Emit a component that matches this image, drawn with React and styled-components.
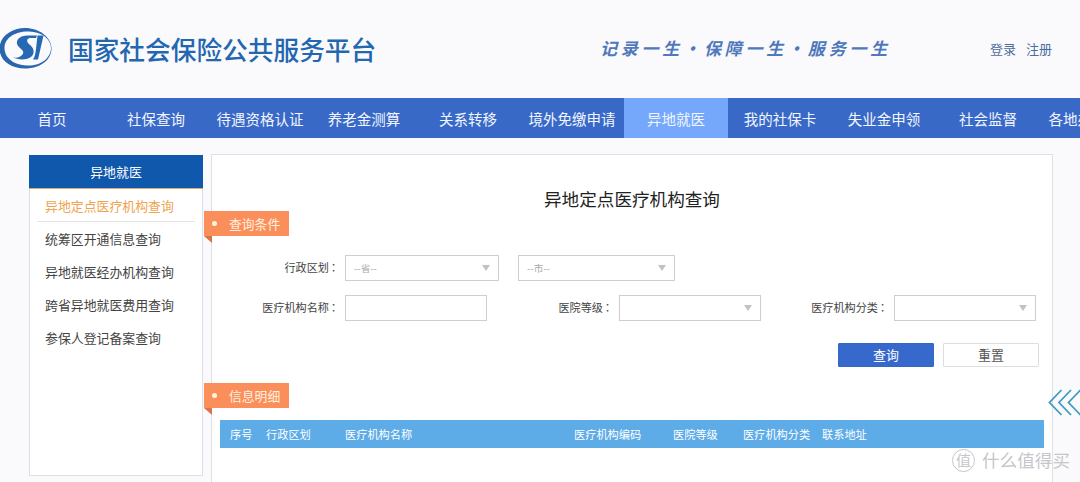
import React from "react";
import styled, { createGlobalStyle } from "styled-components";

const GlobalStyle = createGlobalStyle`
  * {
    box-sizing: border-box;
  }
  body {
    margin: 0;
    background-color: #fafafc;
    font-family: "Noto Sans CJK SC", sans-serif;
    color: #444;
    overflow: hidden;
  }
`;

const Page = styled.div`
  position: relative;
  width: 1080px;
  height: 482px;
  overflow: hidden;
`;

// Header
const Header = styled.header`
  display: flex;
  align-items: center;
  height: 98px;
`;

const SiteName = styled.h1`
  margin: 0 0 1px 16px;
  width: 530px;
  font-size: 25.7px;
  font-weight: 500;
  line-height: 40px;
  color: #2367b0;
`;

const Slogan = styled.div`
  display: flex;
  width: 392px;
  padding-bottom: 2px;
  font-size: 17px;
  font-weight: 700;
  font-style: italic;
  line-height: 24px;
  color: #5078bb;

  span {
    width: 20.8px;
    text-align: center;
  }
`;

const UserLinks = styled.div`
  display: flex;
  gap: 10px;
  padding-bottom: 1px;

  a {
    font-size: 13px;
    line-height: 20px;
    color: #4a6d9f;
  }
`;

// Navigation bar
const NavList = styled.ul`
  display: flex;
  list-style-type: none;
  margin: 0;
  padding: 0;
  height: 40px;
  background-color: #3969c7;
`;

const NavItem = styled.li`
  flex: 0 0 104px;
  text-align: center;
  white-space: nowrap;
  font-size: 14.5px;
  line-height: 41px;
  height: 40px;
  color: #f2f6ff;
  background-color: ${(props) => (props.$active ? "#75a8fa" : "transparent")};
`;

const Body = styled.main`
  display: flex;
  align-items: flex-start;
  gap: 8px;
  padding: 16px 0 0 29px;
`;

// Sidebar
const SideBar = styled.aside`
  width: 174px;
  height: 321px;
  margin-top: 1px;
  background-color: #fff;
  border: 1px solid #e0e0e4;
  border-top: none;
`;

const SideTitle = styled.div`
  height: 34px;
  margin: 0 -1px;
  background-color: #0f58ab;
  border-bottom: 1px solid #d9a877;
  text-align: center;
  font-size: 12.9px;
  line-height: 33px;
  color: #fff;
`;

const SideItem = styled.div`
  height: 33px;
  margin: 0 7px;
  padding-left: 8px;
  font-size: 12.9px;
  line-height: 33px;
  color: ${(props) => (props.$active ? "#efa34e" : "#444")};
  border-bottom: 1px solid ${(props) => (props.$active ? "#e6e3e3" : "transparent")};
`;

// Main panel
const Panel = styled.section`
  width: 842px;
  height: 360px;
  background-color: #fff;
  border: 1px solid #e0e0e4;
`;

const PanelTitle = styled.h2`
  margin: 32px 0 0;
  text-align: center;
  font-size: 17.6px;
  font-weight: 400;
  line-height: 24px;
  height: 24px;
  color: #222;
`;

const Ribbon = styled.div`
  position: relative;
  display: flex;
  align-items: center;
  width: 85px;
  height: 25px;
  margin-left: -8px;
  padding-left: 8px;
  background-color: #fb8f5c;
  font-size: 12.8px;
  line-height: 23px;
  color: #fff0df;

  &::before {
    content: "";
    width: 5px;
    height: 5px;
    margin-right: 12px;
    border-radius: 50%;
    background-color: #fff6dc;
  }

  &::after {
    content: "";
    position: absolute;
    left: 0;
    top: 25px;
    border-top: 7px solid #dc7348;
    border-left: 8px solid transparent;
  }
`;

const Form = styled.div`
  padding: 19px 0 0 41px;
  height: 147px;
`;

const FormRow = styled.div`
  display: flex;
  align-items: center;
  height: 25px;
  margin-bottom: 15px;
`;

const Label = styled.label`
  width: ${(props) => props.$width}px;
  padding: 0 5px 2px 0;
  text-align: right;
  white-space: nowrap;
  font-size: 11.1px;
  color: #444;

  span {
    margin: 0 1px 0 -1px;
    font-family: "Noto Sans CJK TC", sans-serif;
  }
`;

const Field = styled.div`
  display: flex;
  align-items: center;
  justify-content: space-between;
  width: ${(props) => props.$width}px;
  height: 26px;
  margin-right: ${(props) => props.$gap || 0}px;
  padding: 0 8px;
  border: 1px solid #cecece;
  background-color: #fff;
  font-size: 9.6px;
  color: #aaa;
`;

const Arrow = styled.i`
  border-top: 6px solid #c2c2c2;
  border-left: 4px solid transparent;
  border-right: 4px solid transparent;
`;

const Actions = styled.div`
  display: flex;
  justify-content: flex-end;
  gap: 9px;
  padding: 8px 13px 0 0;
`;

const Button = styled.button`
  width: 96px;
  height: 24px;
  padding: 0;
  border: 1px solid ${(props) => (props.$primary ? "#3466c8" : "#dedee2")};
  border-radius: 1px;
  background-color: ${(props) => (props.$primary ? "#3769cc" : "#fff")};
  color: ${(props) => (props.$primary ? "#fff" : "#555")};
  font-family: inherit;
  font-size: 12.9px;
  line-height: 22px;
`;

const TableHead = styled.div`
  display: grid;
  grid-template-columns: 36px 79px 229px 99px 70px 79px 1fr;
  width: 824px;
  height: 28px;
  margin: 12px 0 0 8px;
  padding-left: 10px;
  background-color: #5dabe7;
  font-size: 11.2px;
  line-height: 29px;
  color: #fff;
`;

// Floating pieces over the page
const DrawerHandle = styled.svg`
  position: absolute;
  right: 0;
  top: 389px;
`;

const Watermark = styled.div`
  position: absolute;
  left: 952px;
  top: 448px;
  display: flex;
  align-items: center;
  gap: 7px;
  font-size: 17.6px;
  line-height: 24px;
  color: #c6c6ca;
  white-space: nowrap;
`;

const Seal = styled.span`
  width: 23px;
  height: 23px;
  border: 1px solid #c6c6ca;
  border-radius: 50%;
  text-align: center;
  font-size: 15px;
  line-height: 20px;
`;

const navItems = [
  "首页",
  "社保查询",
  "待遇资格认证",
  "养老金测算",
  "关系转移",
  "境外免缴申请",
  "异地就医",
  "我的社保卡",
  "失业金申领",
  "社会监督",
  "各地办事大厅",
];

const sideItems = [
  "异地定点医疗机构查询",
  "统筹区开通信息查询",
  "异地就医经办机构查询",
  "跨省异地就医费用查询",
  "参保人登记备案查询",
];

const columns = ["序号", "行政区划", "医疗机构名称", "医疗机构编码", "医院等级", "医疗机构分类", "联系地址"];

const Logo = () => (
  <svg width="52" height="42" viewBox="0 0 52 42">
    <path
      fill="#2a66ae"
      fillRule="evenodd"
      d="M25 0C39 0 51.500 9 51.500 20.500C51.500 32 40 40.500 25 40.500C10 40.500-0.500 32-0.500 20.500C-0.500 9 11 0 25 0ZM29 3.500C15 3 4.500 10 4.500 20C4.500 30 14 37 27 37.500C41 38 51 30 51 20C51 11 42 4 29 3.500Z"
    />
    <path
      fill="#2568b4"
      d="M37 7.500H28C18 7.500 14.500 14 18.500 18.500C21 21.500 25 23 22.500 26.500C20.500 29.500 16 30.500 12.500 29C19 33 32.500 32.500 33.500 24.500C34 20 31 18 28.500 15.500C26 12.500 27 10 31 10H36ZM37.500 7.500H43.500L38 31.500H33C35 29 35.500 25 36 21Z"
    />
  </svg>
);

const Caption = ({ width, children }) => (
  <Label $width={width}>
    {children}
    <span>：</span>
  </Label>
);

const App = () => {
  return (
    <Page>
      <GlobalStyle />
      <Header>
        <Logo />
        <SiteName>国家社会保险公共服务平台</SiteName>
        <Slogan>
          {[..."记录一生·保障一生·服务一生"].map((char, i) => (
            <span key={i}>{char}</span>
          ))}
        </Slogan>
        <UserLinks>
          <a>登录</a>
          <a>注册</a>
        </UserLinks>
      </Header>

      <NavList>
        {navItems.map((item) => (
          <NavItem key={item} $active={item === "异地就医"}>
            {item}
          </NavItem>
        ))}
      </NavList>

      <Body>
        <SideBar>
          <SideTitle>异地就医</SideTitle>
          {sideItems.map((item, i) => (
            <SideItem key={item} $active={i === 0}>
              {item}
            </SideItem>
          ))}
        </SideBar>

        <Panel>
          <PanelTitle>异地定点医疗机构查询</PanelTitle>
          <Ribbon>查询条件</Ribbon>
          <Form>
            <FormRow>
              <Caption width={92}>行政区划</Caption>
              <Field $width={154} $gap={19}>
                --省--
                <Arrow />
              </Field>
              <Field $width={157}>
                --市--
                <Arrow />
              </Field>
            </FormRow>
            <FormRow>
              <Caption width={92}>医疗机构名称</Caption>
              <Field $width={142} />
              <Caption width={132}>医院等级</Caption>
              <Field $width={142}>
                <span />
                <Arrow />
              </Field>
              <Caption width={133}>医疗机构分类</Caption>
              <Field $width={142}>
                <span />
                <Arrow />
              </Field>
            </FormRow>
            <Actions>
              <Button $primary>查询</Button>
              <Button>重置</Button>
            </Actions>
          </Form>
          <Ribbon>信息明细</Ribbon>
          <TableHead>
            {columns.map((column) => (
              <span key={column}>{column}</span>
            ))}
          </TableHead>
        </Panel>
      </Body>

      <DrawerHandle width="32" height="27" viewBox="0 0 32 27" fill="none" stroke="#3d9dbd" strokeWidth="1.8">
        <path d="M13.500 1L1.500 13.500L13.500 26M23 1L11 13.500L23 26M32.500 1L20.500 13.500L32.500 26" />
      </DrawerHandle>
      <Watermark>
        <Seal>值</Seal>
        什么值得买
      </Watermark>
    </Page>
  );
};

export default App;
